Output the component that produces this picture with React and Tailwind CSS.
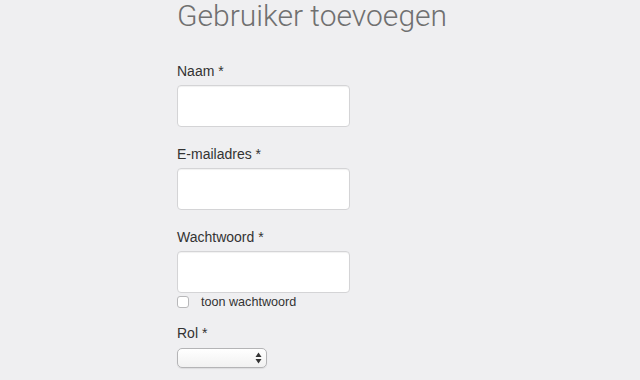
import React from "react";

const fields = [
  { id: "naam", label: "Naam *", type: "text" },
  { id: "email", label: "E-mailadres *", type: "email" },
  { id: "wachtwoord", label: "Wachtwoord *", type: "password" },
];

export default function App() {
  return (
    <div className="min-h-screen w-full bg-[#efeff1] font-['Liberation_Sans',Arial,sans-serif] text-[#333]">
      <div className="pl-[177px]">
        {/* Title */}
        <h1 className="h-[61px] pt-px font-['Roboto',sans-serif] font-light text-[30px] leading-[30px] text-[#707070]">
          Gebruiker toevoegen
        </h1>

        {fields.map((f, i) => (
          <div key={f.id} className={i < 2 ? "mb-[17px]" : ""}>
            <label htmlFor={f.id} className="block h-[20px] text-[14px] leading-[20px] mb-[4px]">
              {f.label}
            </label>
            <input
              id={f.id}
              type={f.type}
              className="block w-[173px] h-[42px] bg-white rounded-[4px] border border-[#d4d4d6] shadow-[inset_0_1px_1px_rgba(0,0,0,0.06)] outline-none"
            />
          </div>
        ))}

        {/* Show password */}
        <div className="flex items-center h-[16px] mt-[1px]">
          <span className="w-[12px] h-[12px] bg-white border border-[#b8b8ba] rounded-[3px]" />
          <span className="ml-[12px] text-[12.6px] leading-[16px] text-[#333]">toon wachtwoord</span>
        </div>

        {/* Rol */}
        <div className="mt-[13px]">
          <label className="block h-[20px] text-[14px] leading-[20px] mb-[5px]">Rol *</label>
          <div className="flex items-center justify-end w-[90px] h-[20px] rounded-[5px] border border-[#b4b4b6] bg-gradient-to-b from-white to-[#f1f1f1] shadow-[0_1px_1px_rgba(0,0,0,0.08)] pr-[4px]">
            <svg width="7" height="12" viewBox="0 0 7 12">
              <path d="M3.5 0.5 L6.5 5 L0.5 5 Z" fill="#333" />
              <path d="M3.5 11.5 L6.5 7 L0.5 7 Z" fill="#333" />
            </svg>
          </div>
        </div>
      </div>
    </div>
  );
}
